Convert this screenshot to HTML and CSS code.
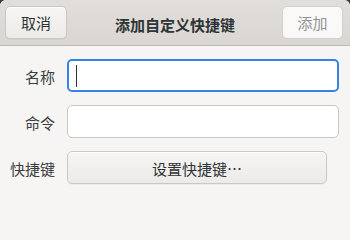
FILE: index.html
```html
<!DOCTYPE html>
<html lang="zh-CN">
<head>
<meta charset="utf-8">
<title>添加自定义快捷键</title>
<link rel="stylesheet" href="styles.css">
</head>
<body>
<div class="window">
  <header class="headerbar">
    <div class="hb-start"><button class="btn btn-cancel">取消</button></div>
    <div class="title">添加自定义快捷键</div>
    <div class="hb-end"><button class="btn btn-add" disabled>添加</button></div>
  </header>
  <main class="form">
    <div class="label">名称</div>
    <div class="entry focused"><span class="caret"></span></div>
    <div class="label">命令</div>
    <div class="entry"></div>
    <div class="label">快捷键</div>
    <button class="btn btn-shortcut">设置快捷键…</button>
  </main>
</div>
</body>
</html>
```
FILE: styles.css
```css
html, body {
  margin: 0;
  padding: 0;
  background: #3a3a3a;
}
body {
  width: 350px;
  min-height: 100vh;
  overflow: hidden;
  font-family: "Noto Sans CJK SC", "Noto Sans", sans-serif;
  font-size: 15px;
  color: #2e3436;
}
.window {
  width: 350px;
  min-height: 100vh;
  background: #f6f5f4;
  border-radius: 6px 6px 0 0;
  overflow: hidden;
}
.headerbar {
  height: 45px;
  border-bottom: 1px solid #bfb8b1;
  background: linear-gradient(to bottom, #e1dedb, #dad6d2);
  display: grid;
  grid-template-columns: 1fr auto 1fr;
  align-items: start;
  box-sizing: content-box;
}
.hb-start {
  padding: 6px 0 0 5px;
}
.hb-end {
  padding: 6px 7px 0 0;
  display: flex;
  justify-content: flex-end;
}
.title {
  font-weight: bold;
  font-size: 15px;
  line-height: 20px;
  padding-top: 15px;
  color: #2e3436;
}
.btn {
  font-family: inherit;
  font-size: 15px;
  height: 33px;
  border: 1px solid #cdc7c2;
  border-radius: 5px;
  background: linear-gradient(to bottom, #f6f5f4, #edebe9);
  color: #2e3436;
  padding: 0;
  margin: 0;
  line-height: 20px;
  box-shadow: inset 0 1px rgba(255,255,255,0.8), 0 1px 1px rgba(0,0,0,0.04);
}
.btn-cancel {
  width: 62px;
}
.btn-add {
  width: 61px;
  background: #faf9f8;
  border-color: #d5d0cc;
  color: #929595;
  box-shadow: none;
}
.form {
  display: grid;
  grid-template-columns: 45px 1fr;
  grid-auto-rows: 33px;
  column-gap: 12px;
  row-gap: 13px;
  padding: 13px 11px 0 10px;
  align-items: center;
}
.label {
  text-align: right;
  color: #3a3d3e;
  line-height: 20px;
  padding-top: 3px;
  white-space: nowrap;
}
.entry {
  height: 33px;
  box-sizing: border-box;
  background: #ffffff;
  border: 1px solid #cdc7c2;
  border-radius: 5px;
  display: flex;
  align-items: center;
  padding-left: 8px;
}
.entry.focused {
  border: 2px solid #3584e4;
  padding-left: 7px;
}
.caret {
  display: block;
  width: 1px;
  height: 22px;
  background: #2e3436;
  margin-top: 1px;
}
.btn-shortcut {
  width: 260px;
  justify-self: start;
  padding-top: 2px;
}
```
